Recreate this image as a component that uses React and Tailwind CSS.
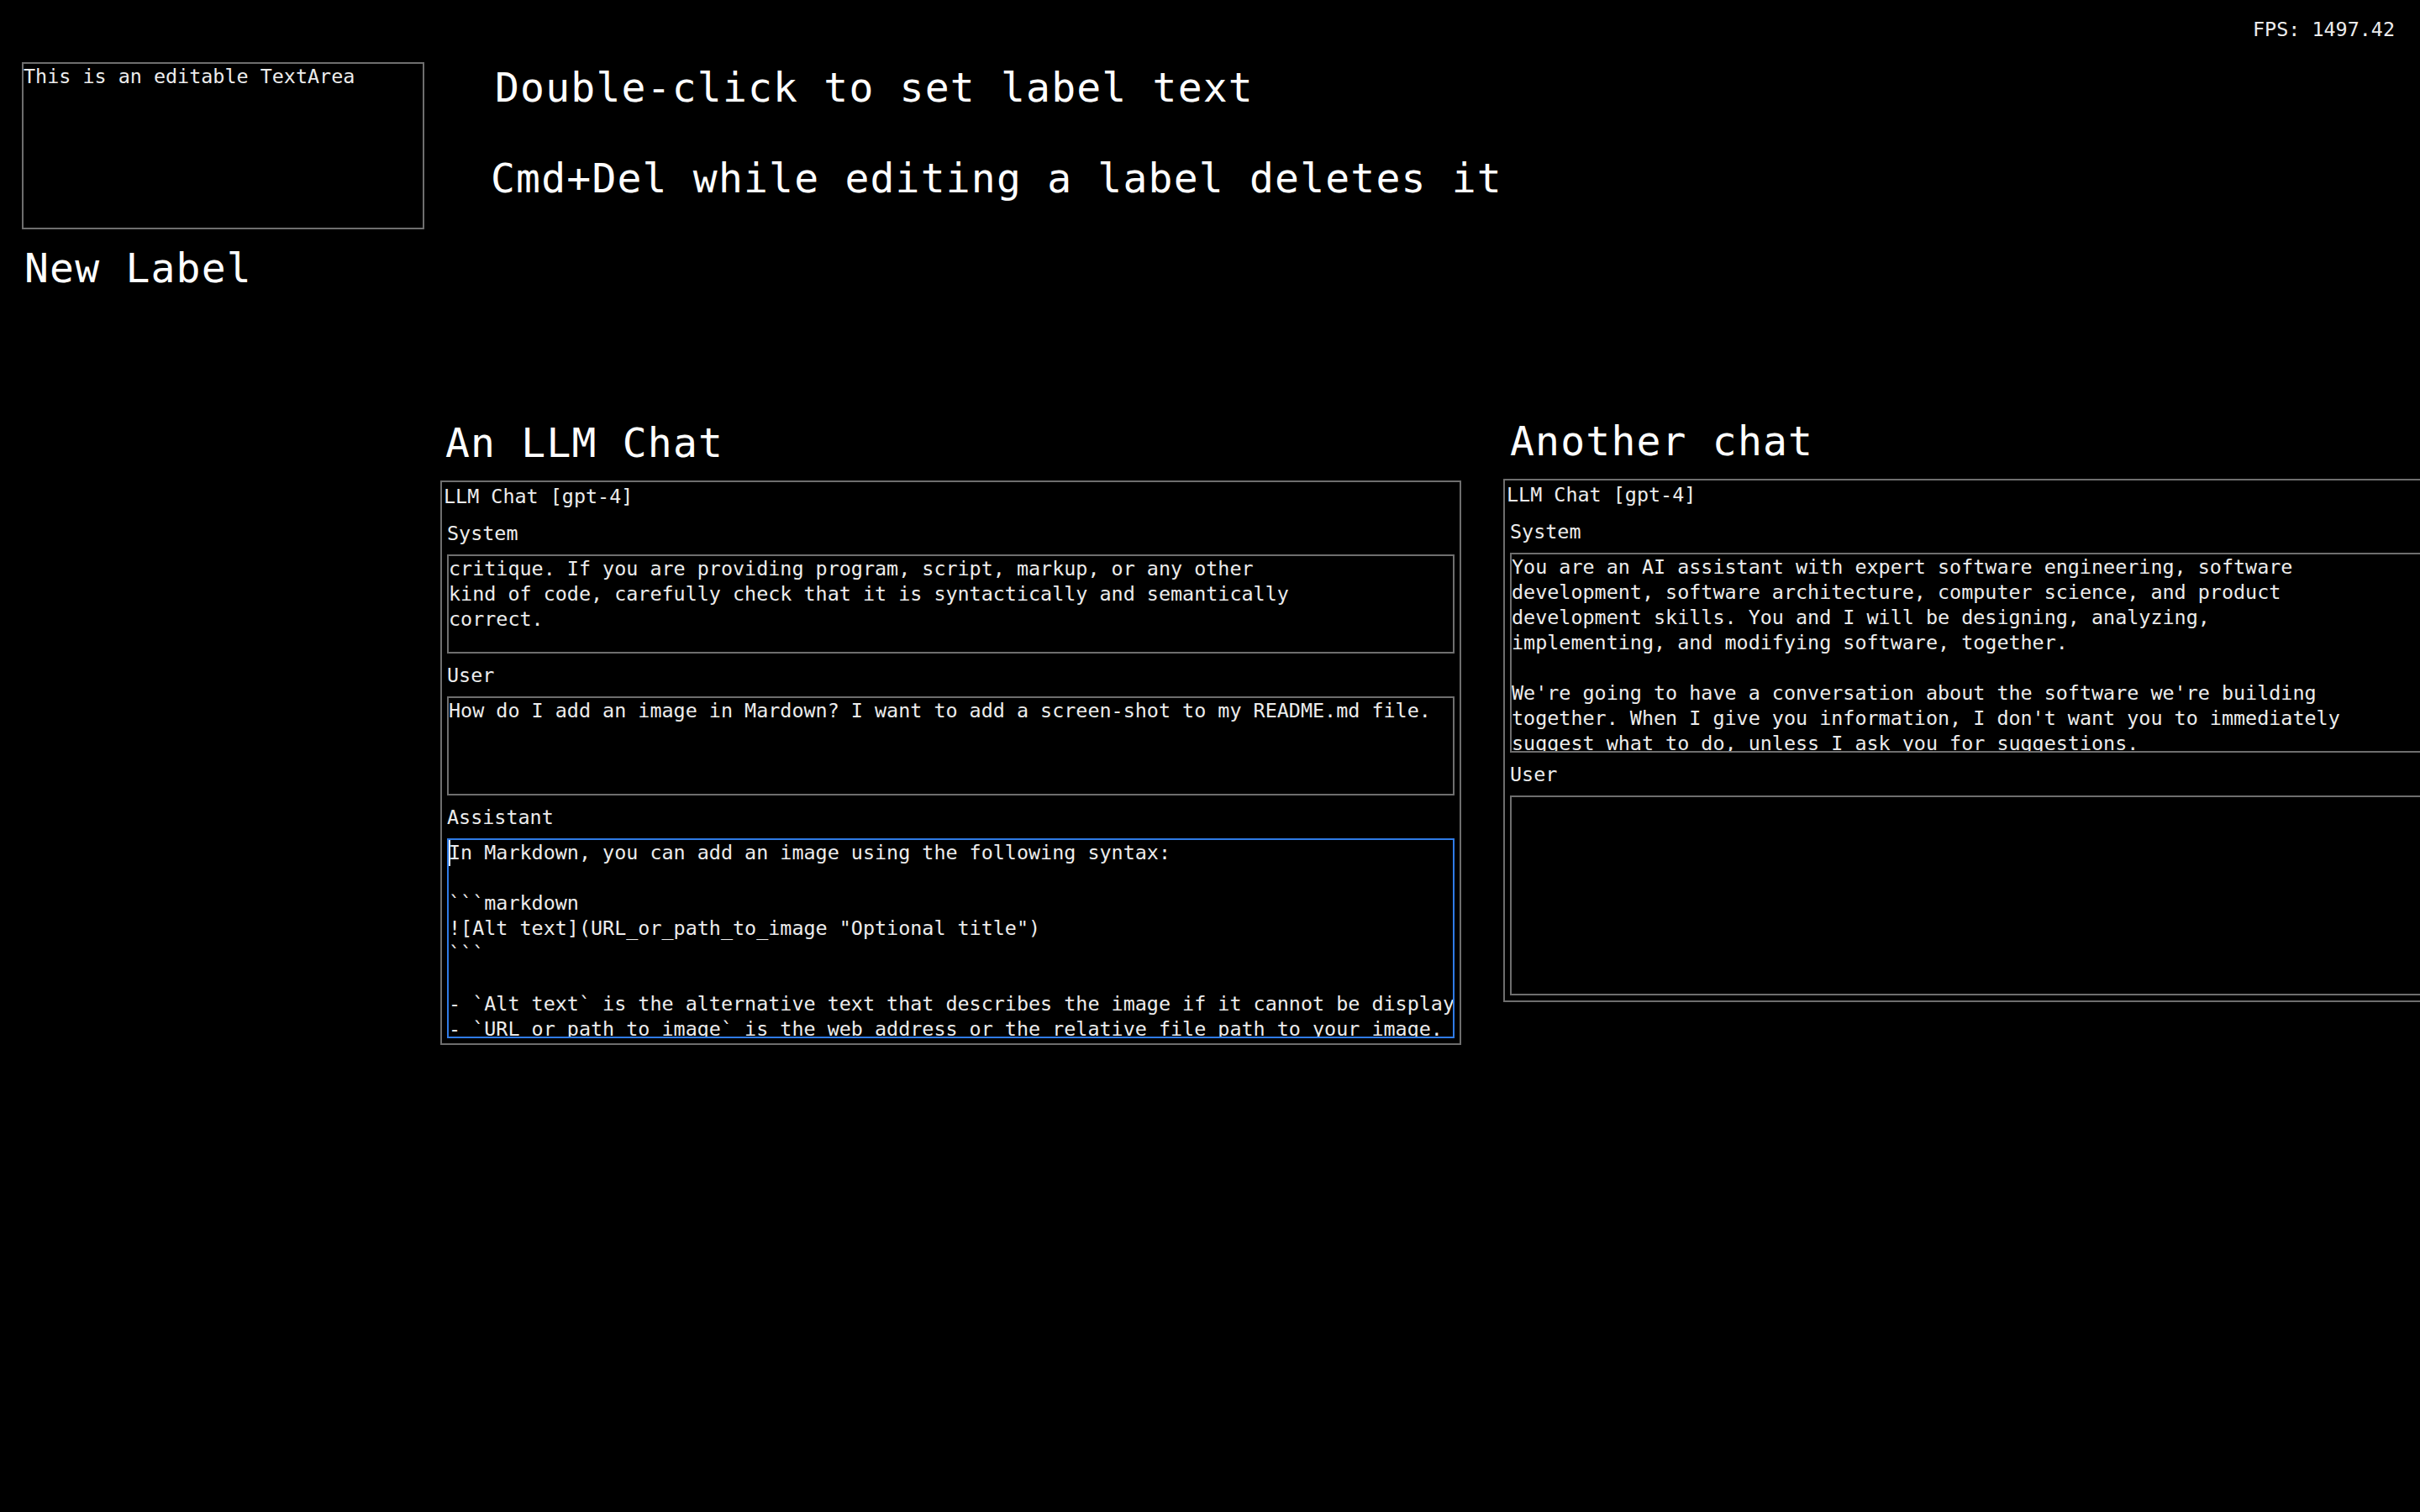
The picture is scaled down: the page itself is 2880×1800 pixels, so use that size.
import React from 'react';

const leftSystem = [
  'critique. If you are providing program, script, markup, or any other',
  'kind of code, carefully check that it is syntactically and semantically',
  'correct.',
  '',
];

const rightSystem = [
  'You are an AI assistant with expert software engineering, software',
  'development, software architecture, computer science, and product',
  'development skills. You and I will be designing, analyzing,',
  'implementing, and modifying software, together.',
  '',
  "We're going to have a conversation about the software we're building",
  "together. When I give you information, I don't want you to immediately",
  'suggest what to do, unless I ask you for suggestions.',
];

const assistantText = [
  'In Markdown, you can add an image using the following syntax:',
  '',
  '```markdown',
  '![Alt text](URL_or_path_to_image "Optional title")',
  '```',
  '',
  '- `Alt text` is the alternative text that describes the image if it cannot be displayed.',
  '- `URL_or_path_to_image` is the web address or the relative file path to your image.',
];

const bigLabel = 'text-white text-[48px] leading-[48px] tracking-[1.2px] whitespace-nowrap';

function TextBox({ lines, tall, focused }) {
  return (
    <div
      className={`relative mt-[10px] overflow-hidden whitespace-pre border-2 ${
        tall ? 'h-[238px]' : 'h-[118px]'
      } ${focused ? 'border-[#2f7be6]' : 'border-[#6e6e6e]'}`}
    >
      {lines.map((line, i) => (
        <div key={i} className="h-[30px]">{line}</div>
      ))}
      {/* caret */}
      {focused && <div className="absolute left-0 top-0 w-[2px] h-[31px] bg-white"></div>}
    </div>
  );
}

function Section({ label, first, children }) {
  return (
    <div className={`flex flex-col ${first ? 'mt-[14px]' : 'mt-[11px]'}`}>
      <div className="h-[30px]">{label}</div>
      {children}
    </div>
  );
}

function ChatNode({ title, className, titleClass, children }) {
  return (
    <div className={`flex flex-col gap-[21px] shrink-0 ${className}`}>
      <div className={`${bigLabel} ${titleClass}`}>{title}</div>
      <div className="w-[1215px] border-2 border-[#6e6e6e] pt-[2px] pb-[6px]">
        <div className="h-[30px] pl-[2px]">LLM Chat [gpt-4]</div>
        <div className="px-[6px]">{children}</div>
      </div>
    </div>
  );
}

function App() {
  return (
    <div className="relative w-[2880px] h-[1800px] overflow-hidden bg-black text-[#ececec] font-['DejaVu_Sans_Mono',monospace] text-[23.4px] leading-[30px] pl-[26px] pt-[74px]">
      {/* FPS counter */}
      <div className="absolute right-[30px] top-[20px]">FPS: 1497.42</div>

      {/* top row: text area node + labels */}
      <div className="flex items-start gap-[78px]">
        <div className="flex flex-col gap-[22px]">
          <div className="w-[479px] h-[199px] border-2 border-[#6e6e6e]">This is an editable TextArea</div>
          <div className={`${bigLabel} pl-[3px]`}>New Label</div>
        </div>
        <div className="flex flex-col gap-[60px] pt-[6px]">
          <div className={`${bigLabel} pl-[6px]`}>Double-click to set label text</div>
          <div className={`${bigLabel} pl-[1px]`}>Cmd+Del while editing a label deletes it</div>
        </div>
      </div>

      {/* chat nodes */}
      <div className="flex items-start gap-[50px] mt-[157px] ml-[498px]">
        <ChatNode title="An LLM Chat" className="pt-[3px]" titleClass="pl-[6px]">
          <Section label="System" first>
            <TextBox lines={leftSystem} />
          </Section>
          <Section label="User">
            <TextBox lines={['How do I add an image in Mardown? I want to add a screen-shot to my README.md file.']} />
          </Section>
          <Section label="Assistant">
            <TextBox lines={assistantText} tall focused />
          </Section>
        </ChatNode>

        <ChatNode title="Another chat" className="pt-[1px]" titleClass="pl-[8px]">
          <Section label="System" first>
            <TextBox lines={rightSystem} tall />
          </Section>
          <Section label="User">
            <TextBox lines={[]} tall />
          </Section>
        </ChatNode>
      </div>
    </div>
  );
}

export default App;
